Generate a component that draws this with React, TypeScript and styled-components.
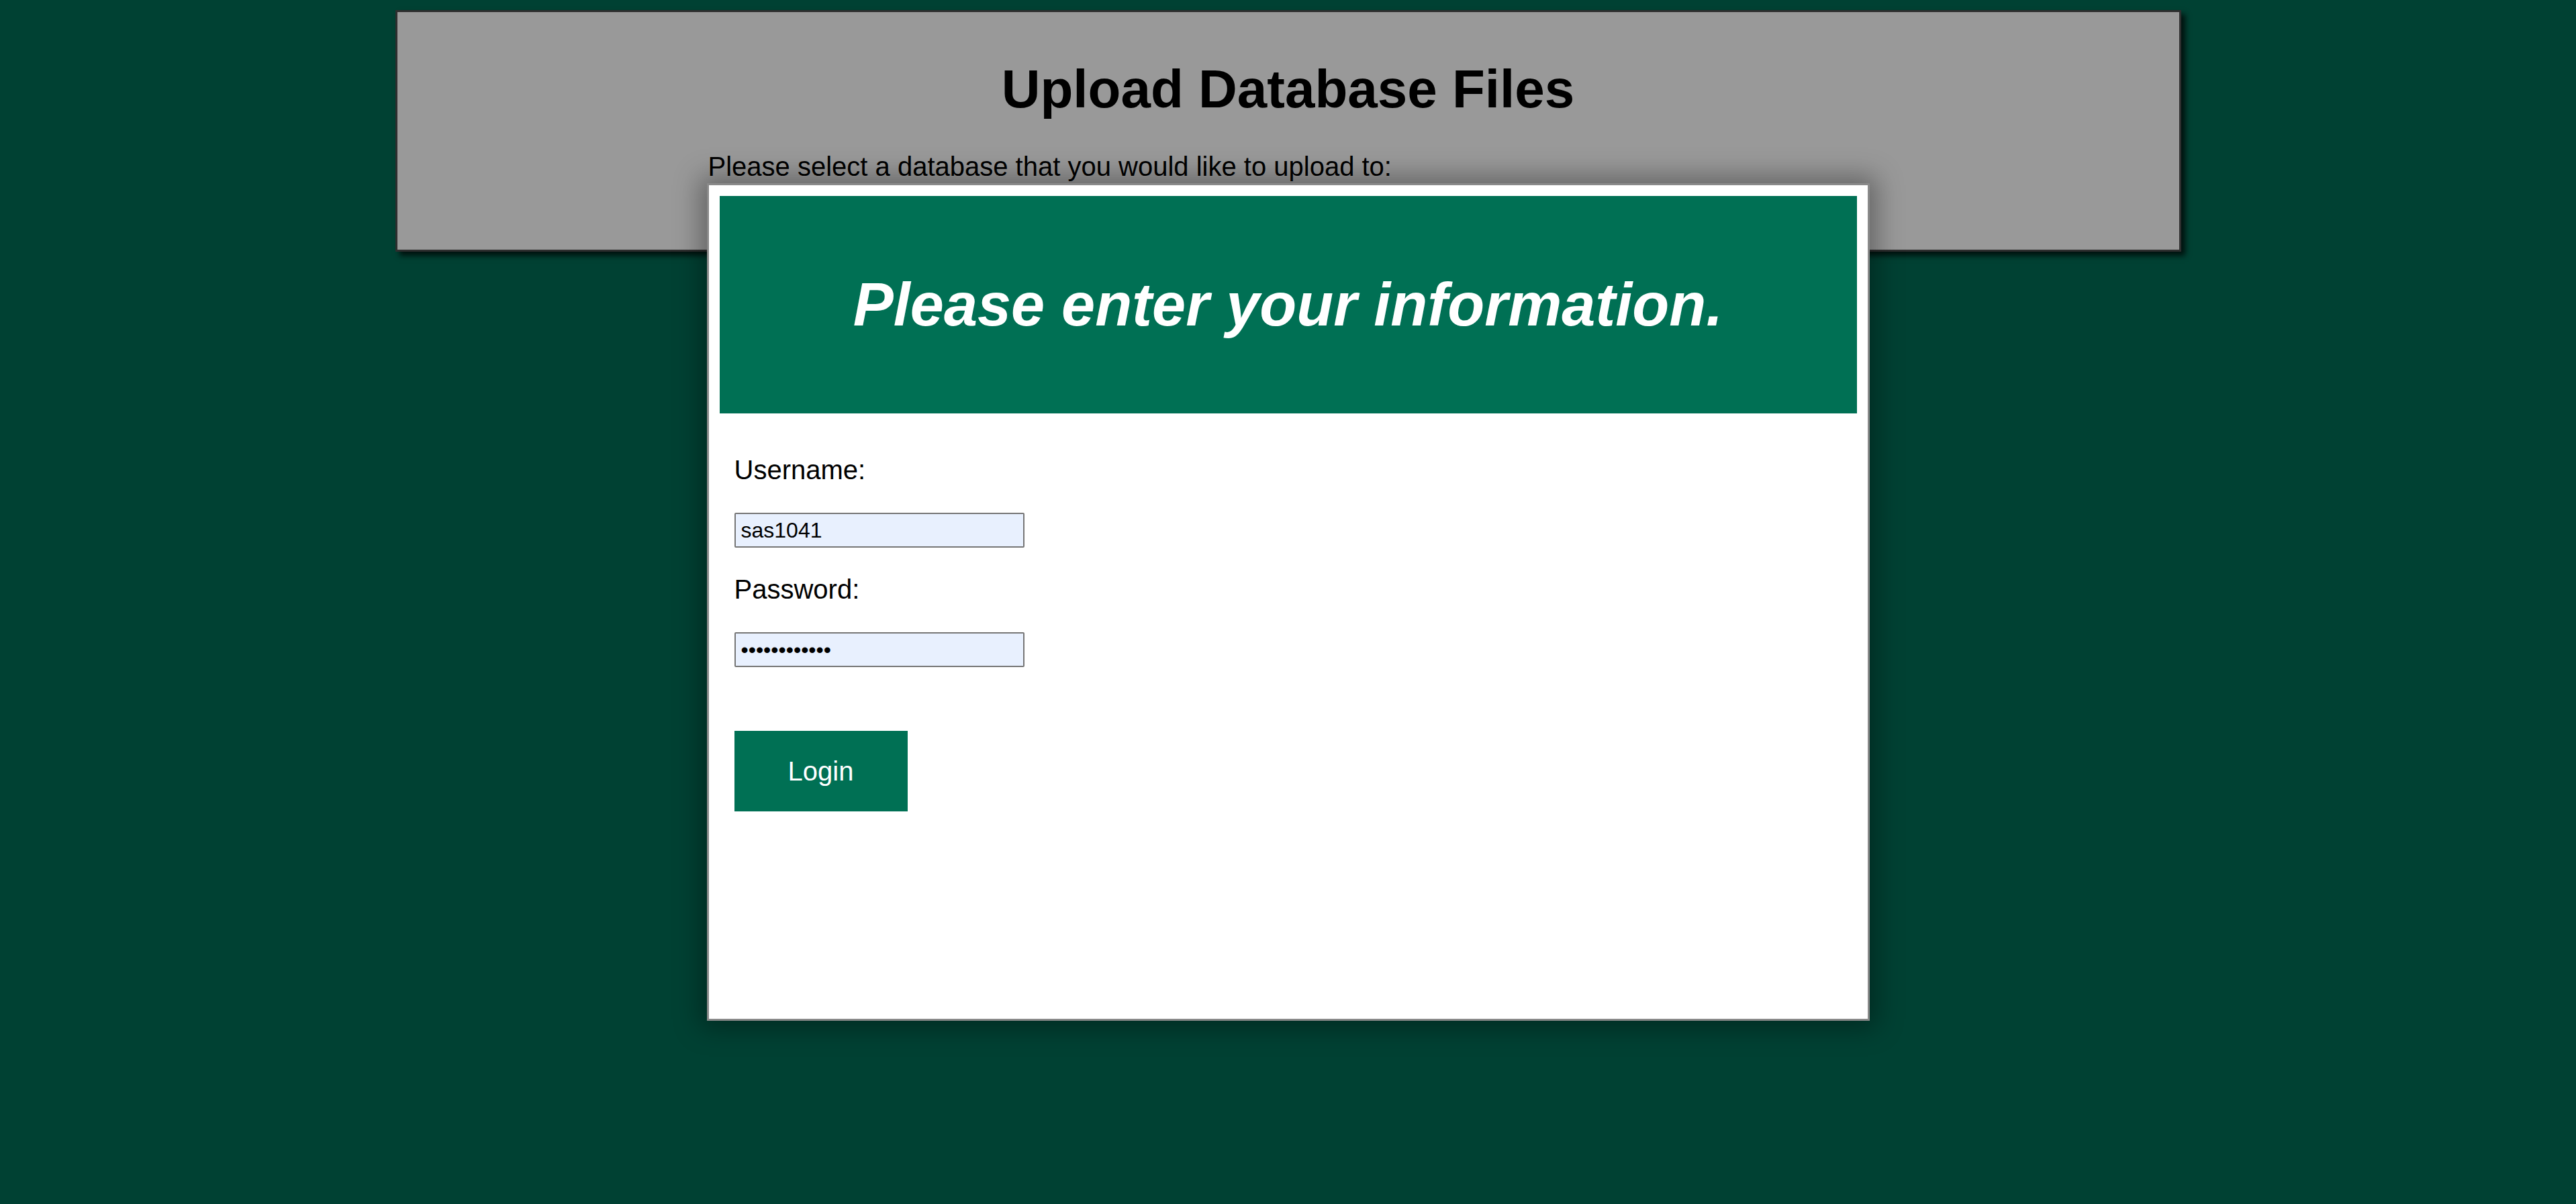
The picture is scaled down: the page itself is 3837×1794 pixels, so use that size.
import React, { FC, useState } from "react";
import styled, { createGlobalStyle } from "styled-components";

const colors = {
  page: "#004133",
  panel: "#999999",
  brand: "#007054",
  inputBg: "#e8f0fe",
};

const GlobalStyle = createGlobalStyle`
  html, body {
    margin: 0;
    padding: 0;
    background-color: ${colors.page};
    font-family: "Liberation Sans", Arial, sans-serif;
  }

  #root {
    min-height: 1794px;
  }
`;

const Page = styled.div`
  position: relative;
  min-height: 1794px;
  padding-top: 15px;
  box-sizing: border-box;
`;

const UploadPanel = styled.section`
  box-sizing: border-box;
  width: 2660px;
  height: 360px;
  margin: 0 auto;
  padding-top: 69px;
  background-color: ${colors.panel};
  border: 3px solid #2e2e2e;
  box-shadow: 6px 6px 8px rgba(0, 0, 0, 0.75);
  display: flex;
  flex-direction: column;
  align-items: center;
`;

const PanelTitle = styled.h1`
  margin: 0;
  font-size: 80px;
  font-weight: 700;
  color: #000;
`;

const PanelContent = styled.div`
  width: 1728px;
  margin-top: 47px;
`;

const PanelText = styled.p`
  margin: 0;
  font-size: 40px;
  color: #000;
`;

/* login dialog lies over the upload panel */
const LoginDialog = styled.div`
  position: absolute;
  top: 273px;
  left: 50%;
  transform: translateX(-50%);
  box-sizing: border-box;
  width: 1732px;
  height: 1248px;
  padding: 16px;
  background-color: #fff;
  border: 3px solid #8a8a8a;
  box-shadow: 0 0 36px 10px rgba(0, 0, 0, 0.35);
  display: flex;
  flex-direction: column;
`;

const DialogHeader = styled.div`
  height: 324px;
  background-color: ${colors.brand};
  display: flex;
  justify-content: center;
  align-items: center;

  h2 {
    margin: 0;
    color: #fff;
    font-size: 90px;
    font-weight: 700;
    font-style: italic;
  }
`;

const LoginForm = styled.form`
  display: flex;
  flex-direction: column;
  align-items: flex-start;
  padding: 61px 0 0 22px;
`;

const FieldLabel = styled.label<{ $gap?: number }>`
  margin-top: ${({ $gap }) => $gap ?? 0}px;
  font-size: 40px;
  line-height: 46px;
  color: #000;
`;

const FieldInput = styled.input`
  box-sizing: border-box;
  width: 432px;
  height: 52px;
  margin-top: 41px;
  padding: 0 8px;
  font-family: "Liberation Sans", Arial, sans-serif;
  font-size: 32px;
  color: #000;
  background-color: ${colors.inputBg};
  border: 2px solid #767676;
  border-radius: 2px;
  outline: none;
`;

const LoginButton = styled.button`
  width: 258px;
  height: 120px;
  margin-top: 95px;
  font-family: "Liberation Sans", Arial, sans-serif;
  font-size: 40px;
  color: #fff;
  background-color: ${colors.brand};
  border: none;
  cursor: pointer;
`;

const App: FC = () => {
  const [username, setUsername] = useState("sas1041");
  const [password, setPassword] = useState("xxxxxxxxxxxx");

  return (
    <>
      <GlobalStyle />
      <Page>
        <UploadPanel>
          <PanelTitle>Upload Database Files</PanelTitle>
          <PanelContent>
            <PanelText>
              Please select a database that you would like to upload to:
            </PanelText>
          </PanelContent>
        </UploadPanel>

        <LoginDialog>
          <DialogHeader>
            <h2>Please enter your information.</h2>
          </DialogHeader>
          <LoginForm onSubmit={(e) => e.preventDefault()}>
            <FieldLabel htmlFor="username">Username:</FieldLabel>
            <FieldInput
              id="username"
              type="text"
              value={username}
              onChange={(e) => setUsername(e.target.value)}
            />
            <FieldLabel htmlFor="password" $gap={39}>
              Password:
            </FieldLabel>
            <FieldInput
              id="password"
              type="password"
              value={password}
              onChange={(e) => setPassword(e.target.value)}
            />
            <LoginButton type="submit">Login</LoginButton>
          </LoginForm>
        </LoginDialog>
      </Page>
    </>
  );
};

export default App;
